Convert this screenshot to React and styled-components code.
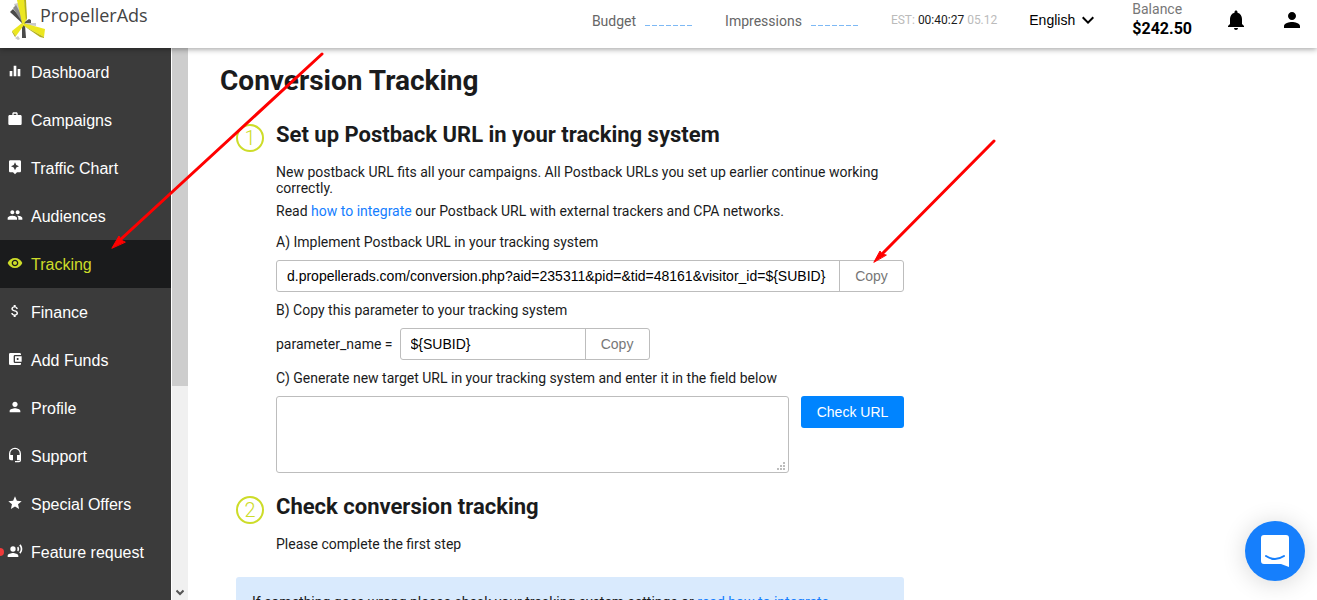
import React from "react";
import styled, { createGlobalStyle } from "styled-components";
import {
  MdEqualizer,
  MdWork,
  MdAssistant,
  MdPeople,
  MdVisibility,
  MdAttachMoney,
  MdAccountBalanceWallet,
  MdPerson,
  MdHeadsetMic,
  MdGrade,
  MdRecordVoiceOver,
  MdNotifications,
  MdExpandMore,
} from "react-icons/md";

const GlobalStyle = createGlobalStyle`
  *, *::before, *::after { box-sizing: border-box; }
  body {
    margin: 0;
    background: #fff;
    color: #1a1b1c;
    font: 14px/16px Roboto, "Liberation Sans", sans-serif;
  }
  button, input, textarea, select {
    margin: 0;
    color: inherit;
    font: 14px/16px "Liberation Sans", Arial, sans-serif;
  }
  h1, h2, p { margin: 0; }
`;

const Page = styled.div`
  position: relative;
  display: flex;
  flex-direction: column;
  height: 100vh;
  overflow: hidden;
`;

const Header = styled.header`
  position: relative;
  z-index: 1;
  flex: none;
  display: flex;
  align-items: center;
  height: 48px;
  padding: 0 13px 0 8px;
  background: #fff;
  box-shadow: 0 1px 6px rgba(0, 0, 0, 0.4);
`;

const Brand = styled.a`
  display: flex;
  align-items: flex-start;
  height: 48px;
  margin-right: auto;
  color: #444;
  text-decoration: none;
`;

const BrandName = styled.span`
  padding-top: 3px;
  margin-left: -6px;
  font: 500 18px/24px "Open Sans", "Noto Sans", sans-serif;
`;

const Metrics = styled.div`
  display: flex;
  gap: 32px;
  padding-bottom: 6px;
  margin-right: 32px;
`;

const Metric = styled.div`
  display: flex;
  align-items: center;
  gap: 9px;
  height: 16px;
  color: #666;
`;

const Dashes = styled.span`
  width: 48px;
  height: 1px;
  margin-top: 9px;
  background: repeating-linear-gradient(90deg, #7db9f5 0 5px, transparent 5px 7px);
`;

const Clock = styled.div`
  margin-right: 32px;
  padding-bottom: 8px;
  font-size: 12px;
  color: #bbb;

  b { font-weight: 400; color: #1a1b1c; }
`;

const Language = styled.label`
  display: flex;
  align-items: center;
  margin-right: 32px;
  padding-bottom: 8px;
  color: #000;

  svg { width: 24px; height: 24px; margin-left: -24px; pointer-events: none; }
`;

const LanguageSelect = styled.select`
  appearance: none;
  width: 71px;
  height: 24px;
  padding: 0;
  border: 0;
  background: transparent;
`;

const Balance = styled.div`
  height: 48px;
  padding-top: 1px;
  margin-right: 32px;
  color: #777;

  strong { display: block; font-size: 16px; line-height: 24px; color: #000; }
`;

const IconButton = styled.button`
  display: flex;
  width: 24px;
  height: 24px;
  padding: 0;
  border: 0;
  background: none;
  color: #000;
  margin-bottom: 8px;

  & + & { margin-left: 32px; }
  svg { width: 24px; height: 24px; }
`;

const Body = styled.div`
  flex: 1;
  display: flex;
  min-height: 0;
`;

const Sidebar = styled.nav`
  flex: none;
  width: 171px;
  overflow: hidden;
  background: #3b3b3b;
`;

const NavItem = styled.a`
  position: relative;
  display: flex;
  align-items: center;
  gap: 8px;
  height: 48px;
  padding: 2px 0 0 7px;
  background: ${(p) => (p.$active ? "#1a1b1c" : "transparent")};
  color: ${(p) => (p.$active ? "#cddc29" : "#fff")};
  font: 16px/24px "Liberation Sans", Arial, sans-serif;
  text-decoration: none;

  svg { width: 16px; height: 16px; margin-bottom: 4px; }
`;

const NewDot = styled.i`
  position: absolute;
  left: -4px;
  top: 20px;
  width: 8px;
  height: 8px;
  border-radius: 50%;
  background: #f03a3a;
`;

const ScrollTrack = styled.div`
  flex: none;
  display: flex;
  flex-direction: column;
  justify-content: space-between;
  align-items: center;
  width: 17px;
  border-left: 1px solid #fff;
  background: #f0f0f0;
  color: #555;
`;

const ScrollThumb = styled.div`
  width: 100%;
  height: 338px;
  background: #cdcdcd;
`;

const ScrollArrow = styled.svg`
  width: 8px;
  height: 7px;
  margin-bottom: 4px;
`;

const Main = styled.main`
  flex: 1;
  min-width: 0;
  overflow: hidden;
  padding: 17px 32px 0;
`;

const Title = styled.h1`
  font-size: 28px;
  line-height: 32px;
  font-weight: 700;
`;

const Step = styled.section`
  display: flex;
  gap: 12px;
  max-width: 684px;
  padding-left: 16px;
  margin-top: ${(p) => p.$gap}px;
`;

const StepNumber = styled.span`
  flex: none;
  display: flex;
  align-items: center;
  justify-content: center;
  width: 28px;
  height: 28px;
  margin-top: 5px;
  border: 2px solid #cddc29;
  border-radius: 50%;
  color: #cddc29;
  font-size: 20px;
  font-weight: 300;
`;

const StepBody = styled.div`
  flex: 1;
  min-width: 0;
`;

const StepTitle = styled.h2`
  margin-bottom: 13px;
  font-size: 22px;
  line-height: 32px;
  font-weight: 700;
`;

const Text = styled.p`
  margin-bottom: 7px;
`;

const Label = styled.label`
  display: block;
  padding: ${(p) => (p.$first ? 8 : 10)}px 0 10px;
`;

const Link = styled.a`
  color: #147eff;
  text-decoration: none;
`;

const CopyField = styled.div`
  display: flex;
  width: ${(p) => p.$width};
  height: 32px;
  border: 1px solid #bdbdbd;
  border-radius: 3px;
`;

const CopyInput = styled.input`
  flex: 1;
  min-width: 0;
  padding: 0 10px;
  border: 0;
  background: none;
  color: #000;
`;

const CopyButton = styled.button`
  flex: none;
  width: 64px;
  padding: 0;
  border: 0;
  border-left: 1px solid #bdbdbd;
  background: none;
  color: #777;
`;

const Row = styled.div`
  display: flex;
  align-items: ${(p) => p.$align};
  gap: ${(p) => p.$gap}px;
`;

const UrlBox = styled.textarea`
  flex: 1;
  display: block;
  height: 77px;
  padding: 8px 10px;
  border: 1px solid #bdbdbd;
  border-radius: 3px;
  background: none;
  resize: none;
`;

const UrlWrap = styled.div`
  position: relative;
  flex: 1;
  display: flex;
`;

const Grip = styled.svg`
  position: absolute;
  right: 4px;
  bottom: 3px;
  width: 8px;
  height: 8px;
  fill: #bdbdbd;
`;

const CheckButton = styled.button`
  flex: none;
  width: 103px;
  height: 32px;
  padding: 0;
  border: 0;
  border-radius: 3px;
  background: #0084ff;
  color: #fff;
`;

const Tip = styled.aside`
  max-width: 668px;
  margin: 25px 0 0 16px;
  padding: 17px 16px;
  border-radius: 3px;
  background: #d9eafd;
`;

const ChatButton = styled.button`
  position: absolute;
  right: 12px;
  bottom: 19px;
  display: flex;
  align-items: center;
  justify-content: center;
  width: 60px;
  height: 60px;
  padding: 0;
  border: 0;
  border-radius: 50%;
  background: #167ffc;
  box-shadow: 0 2px 24px rgba(0, 0, 0, 0.16);
`;

const Annotations = styled.svg`
  position: absolute;
  left: 0;
  top: 0;
  z-index: 2;
  width: 1000px;
  height: 270px;
  pointer-events: none;
`;

const navItems = [
  { label: "Dashboard", Icon: MdEqualizer },
  { label: "Campaigns", Icon: MdWork },
  { label: "Traffic Chart", Icon: MdAssistant },
  { label: "Audiences", Icon: MdPeople },
  { label: "Tracking", Icon: MdVisibility, active: true },
  { label: "Finance", Icon: MdAttachMoney },
  { label: "Add Funds", Icon: MdAccountBalanceWallet },
  { label: "Profile", Icon: MdPerson },
  { label: "Support", Icon: MdHeadsetMic },
  { label: "Special Offers", Icon: MdGrade },
  { label: "Feature request", Icon: MdRecordVoiceOver, fresh: true },
];

function PropellerMark() {
  return (
    <svg width="38" height="40" viewBox="0 0 38 40" aria-hidden="true">
      <path d="M6 4l4-1 7 17-3 3z" fill="#c9c9c9" />
      <path d="M2 12l3-3 11 12-1 3z" fill="#4a4a4a" />
      <path d="M5 8l3-3 8 15-2 2z" fill="#8b8b8b" />
      <path d="M15 23l6-4 2 1v3l-5 2z" fill="#555" />
      <path d="M17 23h11v3l-10-1z" fill="#c9c9c9" />
      <path d="M7 38l3-2 2 3-2 1z" fill="#c9c9c9" />
      <path d="M14 25h3l1 13-4 0z" fill="#4a4a4a" />
      <path d="M9 0h7l3 18-3 6-2-1z" fill="#ece71f" />
      <path d="M16 0h2l1 18-1 3z" fill="#b5b11a" />
      <path d="M14 23L4 31l4 5 8-11z" fill="#ece71f" />
      <path d="M4 31l4 5-1 1-3-5z" fill="#b5b11a" />
      <path d="M15 23l22 6-1 8-20-11z" fill="#ece71f" />
      <path d="M16 26l20 11v1l-4-1z" fill="#b5b11a" />
    </svg>
  );
}

export default function App() {
  return (
    <Page>
      <GlobalStyle />
      <Header>
        <Brand href="#home">
          <PropellerMark />
          <BrandName>PropellerAds</BrandName>
        </Brand>
        <Metrics>
          <Metric>Budget<Dashes /></Metric>
          <Metric>Impressions<Dashes /></Metric>
        </Metrics>
        <Clock>EST: <b>00:40:27</b> 05.12</Clock>
        <Language>
          <LanguageSelect aria-label="Language" defaultValue="English">
            <option>English</option>
          </LanguageSelect>
          <MdExpandMore />
        </Language>
        <Balance>Balance<strong>$242.50</strong></Balance>
        <IconButton aria-label="Notifications"><MdNotifications /></IconButton>
        <IconButton aria-label="Account"><MdPerson /></IconButton>
      </Header>

      <Body>
        <Sidebar>
          {navItems.map(({ label, Icon, active, fresh }) => (
            <NavItem key={label} href="#nav" $active={active}>
              {fresh && <NewDot />}
              <Icon />
              {label}
            </NavItem>
          ))}
        </Sidebar>
        <ScrollTrack>
          <ScrollThumb />
          <ScrollArrow viewBox="0 0 8 7">
            <path d="M0.5 1.500L4 5l3.500-3.500" fill="none" stroke="currentColor" strokeWidth="2" />
          </ScrollArrow>
        </ScrollTrack>

        <Main>
          <Title>Conversion Tracking</Title>

          <Step $gap={22}>
            <StepNumber>1</StepNumber>
            <StepBody>
              <StepTitle>Set up Postback URL in your tracking system</StepTitle>
              <Text>
                New postback URL fits all your campaigns. All Postback URLs you set up earlier
                continue working correctly.
              </Text>
              <Text>
                Read <Link href="#integrate">how to integrate</Link> our Postback URL with external
                trackers and CPA networks.
              </Text>
              <Label $first htmlFor="postback">A) Implement Postback URL in your tracking system</Label>
              <CopyField $width="100%">
                <CopyInput
                  id="postback"
                  readOnly
                  value="d.propellerads.com/conversion.php?aid=235311&pid=&tid=48161&visitor_id=${SUBID}"
                />
                <CopyButton>Copy</CopyButton>
              </CopyField>
              <Label as="p">B) Copy this parameter to your tracking system</Label>
              <Row $align="center" $gap={7}>
                <label htmlFor="parameter">parameter_name =</label>
                <CopyField $width="250px">
                  <CopyInput id="parameter" readOnly value="${SUBID}" />
                  <CopyButton>Copy</CopyButton>
                </CopyField>
              </Row>
              <Label htmlFor="target">
                C) Generate new target URL in your tracking system and enter it in the field below
              </Label>
              <Row $align="flex-start" $gap={12}>
                <UrlWrap>
                  <UrlBox id="target" />
                  <Grip viewBox="0 0 8 8">
                    <path d="M6 0h2v2H6zM3 3h2v2H3zM6 3h2v2H6zM0 6h2v2H0zM3 6h2v2H3zM6 6h2v2H6z" />
                  </Grip>
                </UrlWrap>
                <CheckButton>Check URL</CheckButton>
              </Row>
            </StepBody>
          </Step>

          <Step $gap={18}>
            <StepNumber>2</StepNumber>
            <StepBody>
              <StepTitle>Check conversion tracking</StepTitle>
              <p>Please complete the first step</p>
            </StepBody>
          </Step>

          <Tip>
            If something goes wrong please check your tracking system settings or{" "}
            <Link href="#integrate">read how to integrate</Link>
          </Tip>
        </Main>
      </Body>

      <ChatButton aria-label="Open chat">
        <svg width="28" height="32" viewBox="0 0 28 32">
          <path d="M3 0h22a3 3 0 0 1 3 3v29l-8-3H3a3 3 0 0 1-3-3V3a3 3 0 0 1 3-3z" fill="#fff" />
          <path d="M5 21q9 6 18 0" fill="none" stroke="#167ffc" strokeWidth="2" strokeLinecap="round" />
        </svg>
      </ChatButton>

      <Annotations viewBox="0 0 1000 270" aria-hidden="true">
        <g fill="#f00" stroke="#f00" strokeLinecap="round">
          <path d="M322 54L120 240M994 141L881 255" strokeWidth="3" />
          <path d="M112 248l7-12 2 4 4 2zM874 262l6-11 2 3 4 1z" strokeWidth="1" />
        </g>
      </Annotations>
    </Page>
  );
}
